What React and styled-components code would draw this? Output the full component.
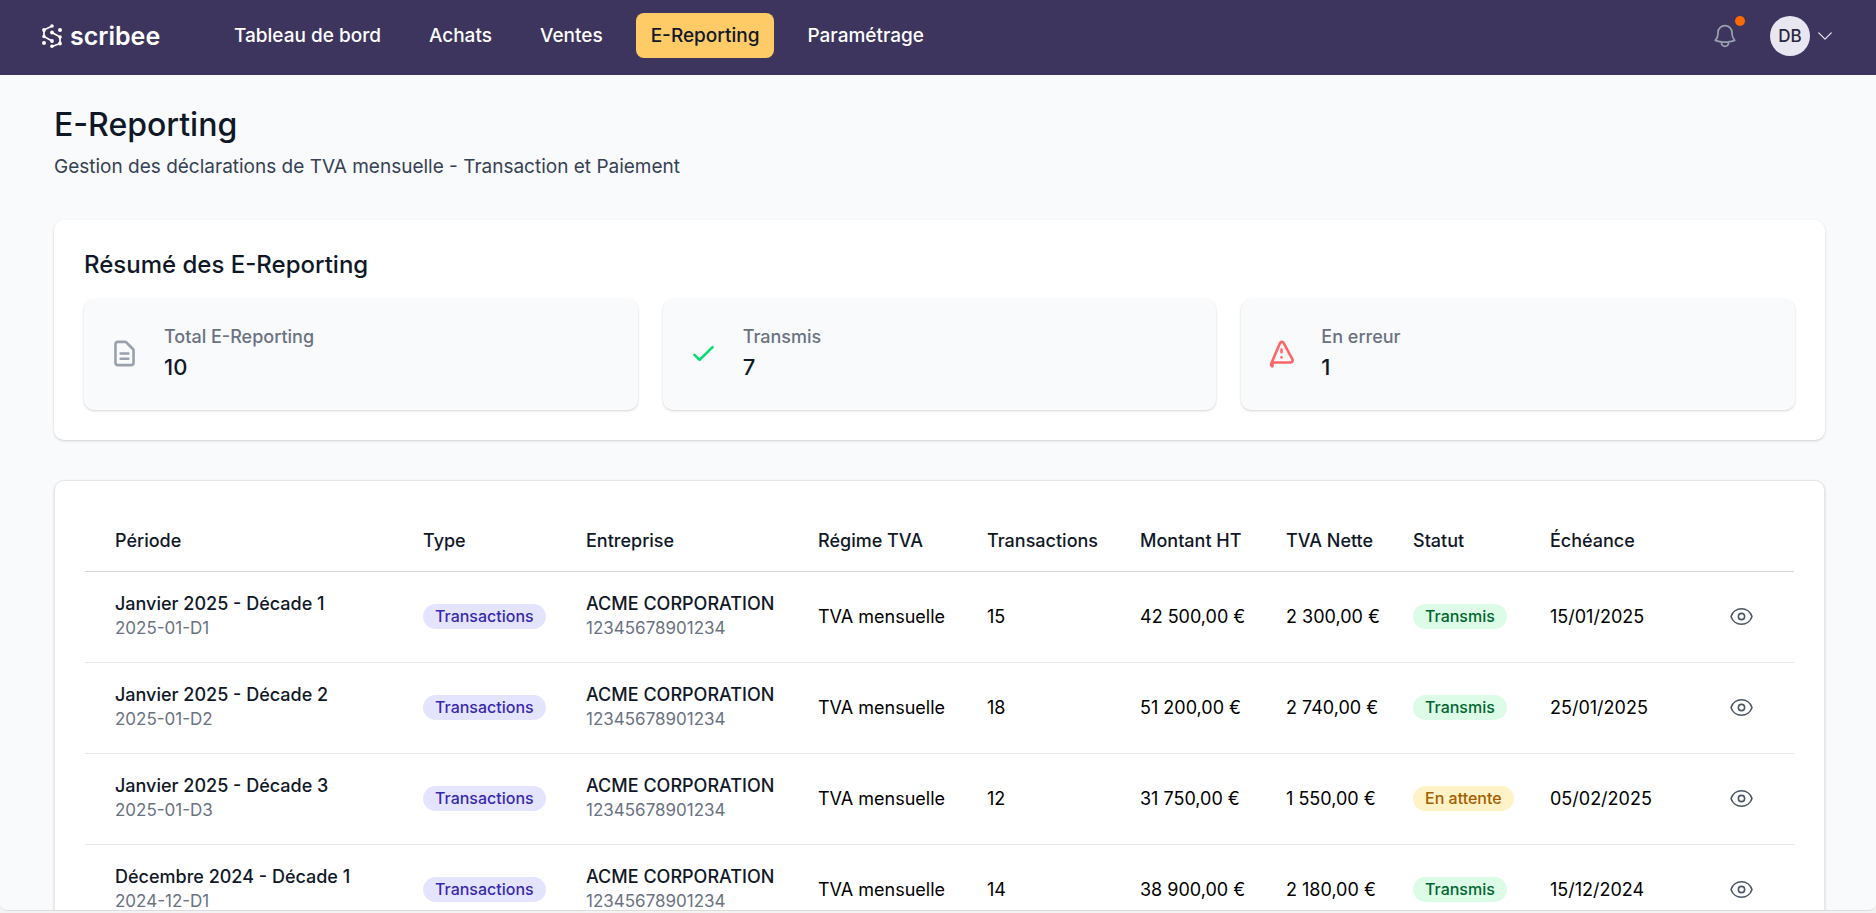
import React from 'react'
import styled, { createGlobalStyle } from 'styled-components'
import { HiOutlineCheck, HiOutlineDocumentText } from 'react-icons/hi'
import { HiOutlineBell, HiOutlineChevronDown, HiOutlineEye } from 'react-icons/hi2'


const GlobalStyle = createGlobalStyle`
  * {
    box-sizing: border-box;
  }
  body {
    margin: 0;
    color: #000;
    background-color: #f3f3f3;
    font-family: Inter, 'Noto Sans', sans-serif;
    font-size: 18px;
    line-height: 25px;
  }
`
const Window = styled.div`
  height: calc(100vh - 2px);
  overflow-y: auto;
  scrollbar-width: none;
  background-color: #f9fafb;
  border-bottom: 1px solid #dcdcdc;
  border-radius: 0 0 8px 8px;
`
const Header = styled.header`
  display: flex;
  align-items: center;
  padding: 13px 41px 17px;
  background-color: #3d355d;
`
const Brand = styled.a`
  display: flex;
  align-items: center;
  gap: 8px;
  width: 178px;
  color: white;
  font-size: 25px;
  font-weight: 600;
  line-height: 30px;
  text-decoration: none;
`
const Nav = styled.nav`
  display: flex;
  flex: 1;
  gap: 18px;
`
const NavLink = styled.a`
  padding: 9px 15px;
  border-radius: 8px;
  color: ${({ $active }) => ($active ? '#101828' : 'white')};
  background-color: ${({ $active }) => ($active ? '#ffcb66' : 'transparent')};
  font-size: 19px;
  font-weight: 500;
  line-height: 27px;
  text-decoration: none;
`
const HeaderActions = styled.div`
  display: flex;
  align-items: center;
  gap: 31px;
`
const IconButton = styled.button`
  display: inline-flex;
  position: relative;
  padding: 0;
  border: none;
  cursor: pointer;
  color: ${({ $color }) => $color};
  background: none;
  vertical-align: middle;
`
const Dot = styled.span`
  top: -6px;
  right: -6px;
  width: 10px;
  height: 10px;
  position: absolute;
  border-radius: 50%;
  background-color: #ff6900;
`
const UserButton = styled.button`
  display: flex;
  align-items: center;
  gap: 5px;
  padding: 0;
  border: none;
  cursor: pointer;
  color: #e8e6f0;
  background: none;
  font-family: inherit;
`
const Avatar = styled.span`
  width: 40px;
  height: 40px;
  border-radius: 50%;
  color: #2a2540;
  background-color: #e8e6f0;
  font-size: 17px;
  font-weight: 500;
  line-height: 40px;
`
const Main = styled.main`
  padding: 30px 51px 40px 54px;
`
const Title = styled.h1`
  margin: 0 0 8px;
  color: #101828;
  font-size: 32px;
  font-weight: 500;
  line-height: 40px;
`
const Subtitle = styled.p`
  margin: 0;
  color: #364153;
  font-size: 19px;
  line-height: 27px;
`
const Card = styled.section`
  margin-top: 40px;
  padding: 30px;
  border-radius: 10px;
  border: ${({ $bordered }) => ($bordered ? '1px solid #e5e7eb' : 'none')};
  background-color: white;
  box-shadow: 0 1px 3px rgba(0, 0, 0, 0.1), 0 1px 2px rgba(0, 0, 0, 0.08);
`
const SectionTitle = styled.h2`
  margin: 0 0 19px;
  color: #101828;
  font-size: 24px;
  font-weight: 500;
  line-height: 30px;
`
const Stats = styled.div`
  display: grid;
  grid-template-columns: repeat(3, 1fr);
  gap: 25px;
`
const Stat = styled.div`
  display: flex;
  align-items: center;
  gap: 24px;
  padding: 24px 25px 26px;
  border-radius: 10px;
  color: ${({ $color }) => $color};
  background-color: #f9fafb;
  box-shadow: 0 1px 3px rgba(0, 0, 0, 0.1), 0 1px 2px rgba(0, 0, 0, 0.08);
`
const StatLabel = styled.div`
  color: #6a7282;
  font-weight: 500;
  line-height: 27px;
`
const StatValue = styled.div`
  color: #101828;
  font-size: 22px;
  font-weight: 500;
  line-height: 34px;
`
const Table = styled.table`
  width: 100%;
  table-layout: fixed;
  border-collapse: separate;
  border-spacing: 0;
`
const Th = styled.th`
  height: 61px;
  padding: 0 0 2px;
  color: #101828;
  border-bottom: 1px solid #d1d5dc;
  font-weight: 500;
  text-align: left;
  &:first-child {
    padding-left: 30px;
  }
`
const Td = styled.td`
  padding: 19px 0 21px;
  border-bottom: 1px solid #e5e7eb;
  white-space: nowrap;
  &:first-child {
    padding-left: 30px;
  }
  &:last-child {
    padding-right: 40px;
    text-align: right;
  }
`
const Strong = styled.div`
  color: #101828;
  font-weight: 500;
`
const Muted = styled.div`
  color: #6a7282;
  font-size: 17px;
`
const badgeColors = {
  Transactions: ['#372aac', '#e4e4ff'],
  Transmis: ['#016630', '#dcfce7'],
  'En attente': ['#a65f00', '#fef3c6']
}
const Badge = styled.span`
  display: inline-block;
  padding: 0 12px;
  border-radius: 13px;
  color: ${({ $kind }) => badgeColors[$kind][0]};
  background-color: ${({ $kind }) => badgeColors[$kind][1]};
  font-size: 16px;
  font-weight: 500;
  vertical-align: middle;
`

const columns = [
  { label: 'Période', width: 338 },
  { label: 'Type', width: 163 },
  { label: 'Entreprise', width: 232 },
  { label: 'Régime TVA', width: 169 },
  { label: 'Transactions', width: 153 },
  { label: 'Montant HT', width: 146 },
  { label: 'TVA Nette', width: 127 },
  { label: 'Statut', width: 137 },
  { label: 'Échéance', width: 134 },
  { label: '', width: 110 }
]

const rows = [
  { period: 'Janvier 2025 - Décade 1', code: '2025-01-D1', count: 15, amount: '42 500,00 €', vat: '2 300,00 €', status: 'Transmis', due: '15/01/2025' },
  { period: 'Janvier 2025 - Décade 2', code: '2025-01-D2', count: 18, amount: '51 200,00 €', vat: '2 740,00 €', status: 'Transmis', due: '25/01/2025' },
  { period: 'Janvier 2025 - Décade 3', code: '2025-01-D3', count: 12, amount: '31 750,00 €', vat: '1 550,00 €', status: 'En attente', due: '05/02/2025' },
  { period: 'Décembre 2024 - Décade 1', code: '2024-12-D1', count: 14, amount: '38 900,00 €', vat: '2 180,00 €', status: 'Transmis', due: '15/12/2024' }
]

const navItems = ['Tableau de bord', 'Achats', 'Ventes', 'E-Reporting', 'Paramétrage']

const LogoMark = () => (
  <svg width="21" height="24" viewBox="0 0 21 24" fill="none" stroke="currentColor" strokeWidth="1.7" aria-hidden="true">
    <path d="M11 2 3 6v6.5l8 4.5M11 8.5l8 4.5v6.5l-8 3" />
    <g fill="currentColor" stroke="none">
      <circle cx="11" cy="2" r="1.8" />
      <circle cx="3" cy="6" r="1.9" />
      <circle cx="19" cy="6" r="2" />
      <circle cx="11" cy="8.5" r="1.9" />
      <circle cx="3" cy="12.5" r="1.8" />
      <circle cx="19" cy="13" r="1.8" />
      <circle cx="11" cy="17" r="1.9" />
      <circle cx="3" cy="19" r="2" />
      <circle cx="19" cy="19.5" r="1.9" />
      <circle cx="11" cy="22.2" r="1.8" />
    </g>
  </svg>
)

const WarningIcon = () => (
  <svg width="31" height="31" viewBox="0 0 24 24" fill="none" stroke="currentColor" strokeWidth="2" strokeLinecap="round" strokeLinejoin="round" aria-hidden="true">
    <path d="M12 9v2m0 4h.01M5.1 19h13.8c1.5 0 2.2-1.4 1.5-2.7L13.7 4c-.7-1.3-2.3-1.3-2.9 0L4.2 19.5c-.5 1.3-.4 2.2.7 2.5z" />
  </svg>
)

const App = () => {
  return (
    <Window>
      <GlobalStyle />
      <Header>
        <Brand href="#">
          <LogoMark />
          scribee
        </Brand>
        <Nav>
          {navItems.map((item) => (
            <NavLink key={item} href="#" $active={item === 'E-Reporting'}>{item}</NavLink>
          ))}
        </Nav>
        <HeaderActions>
          <IconButton type="button" aria-label="Notifications" $color="#99a1af">
            <HiOutlineBell size={28} />
            <Dot />
          </IconButton>
          <UserButton type="button">
            <Avatar>DB</Avatar>
            <HiOutlineChevronDown size={20} />
          </UserButton>
        </HeaderActions>
      </Header>
      <Main>
        <Title>E-Reporting</Title>
        <Subtitle>Gestion des déclarations de TVA mensuelle - Transaction et Paiement</Subtitle>
        <Card>
          <SectionTitle>Résumé des E-Reporting</SectionTitle>
          <Stats>
            <Stat $color="#99a1af">
              <HiOutlineDocumentText size={31} />
              <div>
                <StatLabel>Total E-Reporting</StatLabel>
                <StatValue>10</StatValue>
              </div>
            </Stat>
            <Stat $color="#05df72">
              <HiOutlineCheck size={31} />
              <div>
                <StatLabel>Transmis</StatLabel>
                <StatValue>7</StatValue>
              </div>
            </Stat>
            <Stat $color="#ff6467">
              <WarningIcon />
              <div>
                <StatLabel>En erreur</StatLabel>
                <StatValue>1</StatValue>
              </div>
            </Stat>
          </Stats>
        </Card>
        <Card $bordered>
          <Table>
            <colgroup>
              {columns.map(({ label, width }) => <col key={label} width={width} />)}
            </colgroup>
            <thead>
              <tr>
                {columns.map(({ label }) => <Th key={label}>{label}</Th>)}
              </tr>
            </thead>
            <tbody>
              {rows.map((row) => (
                <tr key={row.code}>
                  <Td>
                    <Strong>{row.period}</Strong>
                    <Muted>{row.code}</Muted>
                  </Td>
                  <Td><Badge $kind="Transactions">Transactions</Badge></Td>
                  <Td>
                    <Strong>ACME CORPORATION</Strong>
                    <Muted>12345678901234</Muted>
                  </Td>
                  <Td>TVA mensuelle</Td>
                  <Td>{row.count}</Td>
                  <Td>{row.amount}</Td>
                  <Td>{row.vat}</Td>
                  <Td><Badge $kind={row.status}>{row.status}</Badge></Td>
                  <Td>{row.due}</Td>
                  <Td>
                    <IconButton type="button" aria-label={`Voir ${row.code}`} $color="#4a5565">
                      <HiOutlineEye size={25} />
                    </IconButton>
                  </Td>
                </tr>
              ))}
            </tbody>
          </Table>
        </Card>
      </Main>
    </Window>
  )
}

export default App
